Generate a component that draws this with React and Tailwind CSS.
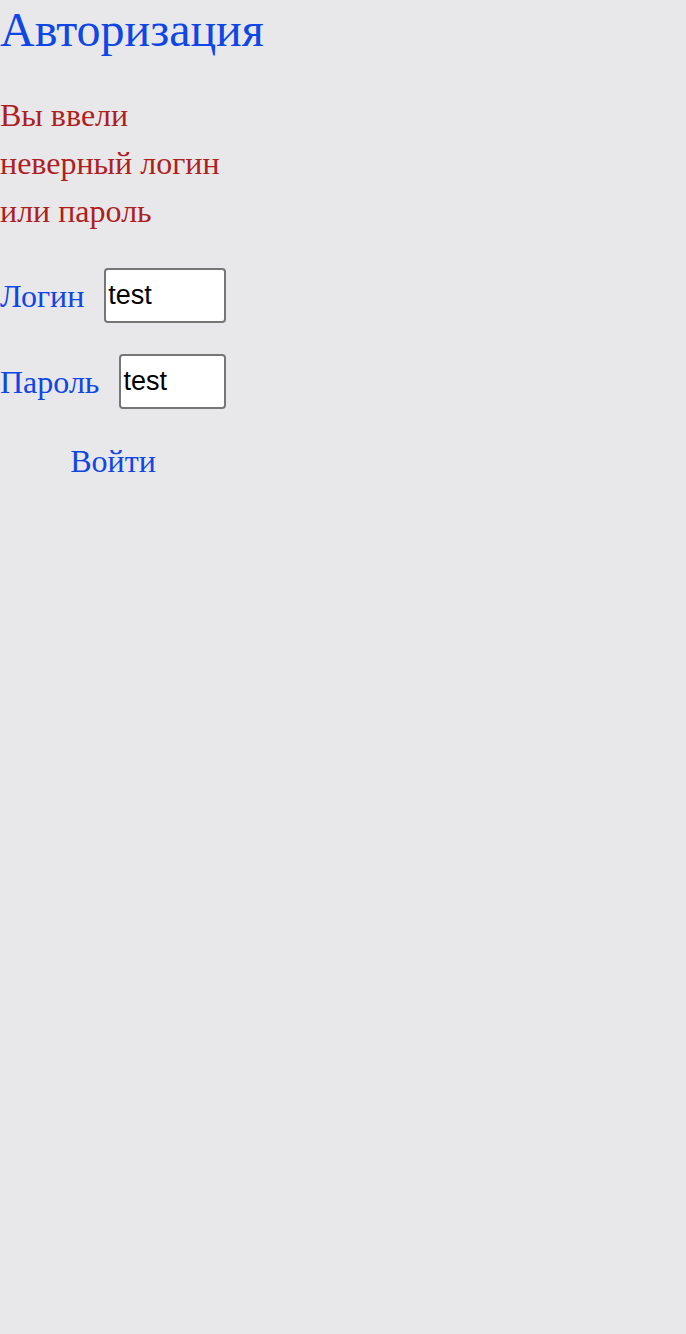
import { useState } from "react";

export default function App() {
  const [login, setLogin] = useState("test");
  const [password, setPassword] = useState("test");

  return (
    <div className="min-h-[1334px] w-full bg-[#e8e8ea] font-['Liberation_Serif',serif]">
      {/* Header */}
      <h1 className="text-[48px] leading-[60px] text-[#0f46e6]">Авторизация</h1>

      {/* Error */}
      <p className="mt-[31px] w-[230px] text-[32px] leading-[48px] text-[#ae1f1f]">
        Вы ввели неверный логин или пароль
      </p>

      {/* Form */}
      <form className="mt-[33px] w-[226px]" onSubmit={(e) => e.preventDefault()}>
        <div className="flex items-center gap-[20px] text-[32px] text-[#0f46e6]">
          <label>Логин</label>
          <input
            type="text"
            value={login}
            onChange={(e) => setLogin(e.target.value)}
            className="h-[55px] min-w-0 flex-1 rounded-[4px] border-2 border-[#767676] bg-white px-[2px] font-['Liberation_Sans',sans-serif] text-[27px] text-black"
          />
        </div>
        <div className="mt-[31px] flex items-center gap-[20px] text-[32px] text-[#0f46e6]">
          <label>Пароль</label>
          <input
            type="text"
            value={password}
            onChange={(e) => setPassword(e.target.value)}
            className="h-[55px] min-w-0 flex-1 rounded-[4px] border-2 border-[#767676] bg-white px-[2px] font-['Liberation_Sans',sans-serif] text-[27px] text-black"
          />
        </div>
        <div className="mt-[28px] flex justify-center">
          <button type="submit" className="text-[32px] leading-[48px] text-[#0f46e6]">
            Войти
          </button>
        </div>
      </form>
    </div>
  );
}
